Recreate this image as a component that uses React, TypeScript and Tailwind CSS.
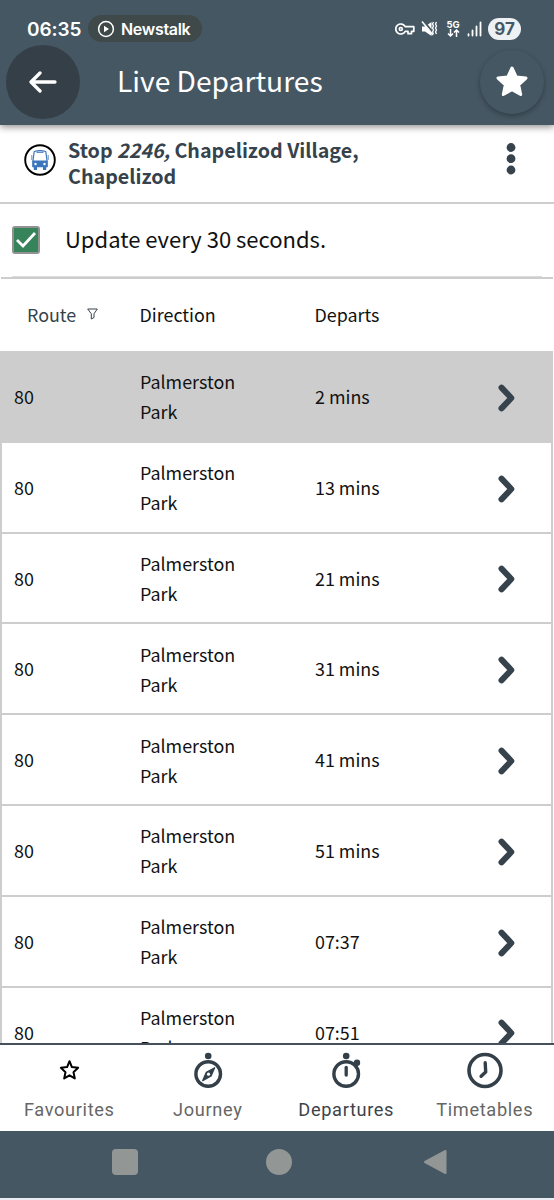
import type { ReactNode } from 'react';

type Departure = {
  route: string;
  direction: string;
  departs: string;
};

const departures: Departure[] = [
  { route: '80', direction: 'Palmerston Park', departs: '2 mins' },
  { route: '80', direction: 'Palmerston Park', departs: '13 mins' },
  { route: '80', direction: 'Palmerston Park', departs: '21 mins' },
  { route: '80', direction: 'Palmerston Park', departs: '31 mins' },
  { route: '80', direction: 'Palmerston Park', departs: '41 mins' },
  { route: '80', direction: 'Palmerston Park', departs: '51 mins' },
  { route: '80', direction: 'Palmerston Park', departs: '07:37' },
  { route: '80', direction: 'Palmerston Park', departs: '07:51' },
];

const StatusBar = () => (
  <div className="flex h-[45px] items-center pt-3 pl-[27px] pr-[33px] font-['Inter',sans-serif] text-white">
    <span className="w-[61px] pt-px text-[19px] leading-none font-semibold tracking-[-0.1px]">06:35</span>
    <div className="flex h-[27px] w-[114px] items-center rounded-full bg-[#3f4949] pl-[9px]">
      <svg width="18" height="18" viewBox="0 0 18 18" fill="none">
        <circle cx="9" cy="9" r="7.4" stroke="white" strokeWidth="1.5" />
        <path d="M7 5.8v6.4L12 9z" fill="white" />
      </svg>
      <span className="ml-[6px] text-[16px] leading-none font-semibold tracking-[-0.3px]">Newstalk</span>
    </div>
    <div className="ml-auto flex items-center">
      <svg width="20" height="14" viewBox="0 0 20 14" fill="none" stroke="white" strokeWidth="1.7">
        <path d="M10.2 4.7A5 5 0 1 0 10.2 9.3H13v2.4h3.5V9.3h2.3V4.7z" strokeLinejoin="round" />
        <circle cx="5.8" cy="7" r="1.5" />
      </svg>
      <svg className="ml-[6px]" width="17" height="18" viewBox="0 0 17 18">
        <path d="M1 6.5h3L10.5 2v14L4 11.500H1z" fill="white" />
        <path d="M2 0l11 14" stroke="#455763" strokeWidth="2" />
        <path d="M1 1.500l11 13.500" stroke="white" strokeWidth="1.600" />
        <path d="M12.500 2l-1 2 1 2-1 2 1 2-1 2 1 2M15.500 2l-1 2 1 2-1 2 1 2-1 2 1 2" fill="none" stroke="white" strokeWidth="1.300" />
      </svg>
      <div className="ml-[8px] flex w-[14px] flex-col items-center">
        <span className="text-[9.5px] leading-[9px] font-bold">5G</span>
        <svg width="13" height="8" viewBox="0 0 13 8" fill="none" stroke="white" strokeWidth="1.500">
          <path d="M3.500 0v7M1 4.500L3.500 7 6 4.500M9.500 8V1M7 3.500L9.500 1 12 3.500" />
        </svg>
      </div>
      <svg className="ml-[7px]" width="15" height="16" viewBox="0 0 15 16" stroke="white" strokeWidth="1.800" strokeLinecap="round">
        <path d="M1.500 13.200v1.300M5.500 9.500v5M9.500 5.500v9M13.500 1.500v13" />
      </svg>
      <span className="ml-[6px] flex h-[22px] w-[33px] items-center justify-center rounded-full bg-[#eef1f4] pt-px text-[17px] leading-none font-bold text-[#455763]">97</span>
    </div>
  </div>
);

const BusIcon = () => (
  <svg width="32" height="32" viewBox="0 0 32 32">
    <circle cx="16" cy="16" r="14.800" fill="white" stroke="black" strokeWidth="1.900" />
    <path d="M10.200 7.500Q16 5.800 21.800 7.500l1.200 9v6H9v-6z" fill="white" stroke="#3b76bd" strokeWidth="1.200" strokeLinejoin="round" />
    <path d="M12.500 8.300h7" stroke="#3b76bd" strokeWidth="1" />
    <path d="M8.400 16.500h15.200v6.700H8.400zM9.800 23h3.200v3H9.800zM19 23h3.200v3H19z" fill="#3b76bd" />
    <path d="M7.800 11v5M24.200 11v5" stroke="#3b76bd" strokeWidth="0.800" />
    <circle cx="11.500" cy="20" r="1.200" fill="white" />
    <circle cx="20.500" cy="20" r="1.200" fill="white" />
  </svg>
);

const Chevron = () => (
  <svg className="mt-[3px]" width="18" height="28" viewBox="0 0 18 28" fill="none" stroke="#36424c" strokeWidth="6" strokeLinecap="round" strokeLinejoin="round">
    <path d="M3.500 3.600l9.800 10.400-9.800 10.400" />
  </svg>
);

const DepartureRow = ({ departure, active }: { departure: Departure; active: boolean }) => (
  <div
    className={`grid h-[90.8px] shrink-0 grid-cols-[126px_175px_183px_1fr] items-center border-b-2 border-[#cdcdcd] pl-[12px] text-[17.9px] text-[#111] ${active ? 'bg-[#cdcdcd]' : 'bg-white'}`}
  >
    <span>{departure.route}</span>
    <span className="w-[110px] leading-[30px]">{departure.direction}</span>
    <span>{departure.departs}</span>
    <Chevron />
  </div>
);

const Tab = ({ label, active, children }: { label: string; active?: boolean; children: ReactNode }) => (
  <div className="flex flex-col items-center pt-[5px]">
    <svg width="42" height="42" viewBox="0 0 42 42" fill="none" stroke="#333f49">
      {children}
    </svg>
    <span className={`mt-[6px] text-[18.2px] leading-6 tracking-[0.65px] ${active ? 'text-[#3c444b]' : 'text-[#666]'}`}>
      {label}
    </span>
  </div>
);

const App = () => {
  return (
    <div className="flex h-[1200px] w-[554px] flex-col overflow-hidden bg-white font-['Noto_Sans_CJK_JP',sans-serif]">
      <header className="relative z-10 h-[125px] shrink-0 bg-[#455763] shadow-[0_2px_7px_rgba(0,0,0,0.45)]">
        <StatusBar />
        <div className="flex h-[74px] items-center pl-[6px] pr-[10px]">
          <button className="flex size-[74px] items-center justify-center rounded-full bg-[#353f48]">
            <svg width="28" height="22" viewBox="0 0 28 22" fill="none" stroke="white" strokeWidth="3.300" strokeLinecap="round" strokeLinejoin="round">
              <path d="M26 11H2M11 2L2 11l9 9" />
            </svg>
          </button>
          <h1 className="ml-[37px] pb-[4px] text-[28.2px] leading-none text-white">Live Departures</h1>
          <button className="ml-auto flex size-[64px] items-center justify-center rounded-full shadow-[0_2px_5px_rgba(0,0,0,0.3)]">
            <svg width="34" height="34" viewBox="0 0 34 34" fill="white" stroke="white" strokeWidth="3" strokeLinejoin="round">
              <path d="M17 3l4.200 9 9.800 1.100-7.300 6.700 2 9.700-8.700-4.900-8.700 4.900 2-9.700L3 13.100l9.800-1.100z" />
            </svg>
          </button>
        </div>
      </header>

      <section className="flex h-[79px] shrink-0 border-b-2 border-[#cdcdcd] pt-[12px] pl-[24px] pr-[38px]">
        <div className="mt-[7px]">
          <BusIcon />
        </div>
        <h2 className="ml-[12px] w-[320px] text-[19.7px] leading-[26px] font-bold text-[#36424c]">
          Stop <i>2246,</i> Chapelizod Village, Chapelizod
        </h2>
        <svg className="mt-[6px] ml-auto" width="10" height="32" viewBox="0 0 10 32" fill="#36424c">
          <circle cx="5" cy="4.500" r="4.400" />
          <circle cx="5" cy="15.700" r="4.400" />
          <circle cx="5" cy="27" r="4.400" />
        </svg>
      </section>

      <label className="flex h-[72px] shrink-0 items-center pl-[12px] text-[22px] text-[#111]">
        <span className="flex size-[28px] items-center justify-center rounded-[3px] border-2 border-[#929292] bg-[#37835a]">
          <svg width="22" height="18" viewBox="0 0 22 18" fill="none" stroke="white" strokeWidth="2.800">
            <path d="M2 9l6 6L20 2" />
          </svg>
        </span>
        <span className="ml-[25px] pb-[4px]">Update every 30 seconds.</span>
      </label>
      <div className="mx-[12px] h-[1px] shrink-0 bg-[#dcdcdc]" />
      <div className="mx-[1px] h-[2px] shrink-0 bg-[#cdcdcd]" />

      <div className="grid h-[72px] shrink-0 grid-cols-[112.5px_175px_1fr] items-center pl-[27px] pb-[1px] text-[17.9px] text-[#111]">
        <span className="flex items-center gap-[11px] text-[#36424c]">
          Route
          <svg width="11" height="12" viewBox="0 0 11 12" fill="none" stroke="#36424c">
            <path d="M.7 1h9.600L7 5.800v3.700L4.300 11V5.800z" />
          </svg>
        </span>
        <span>Direction</span>
        <span>Departs</span>
      </div>

      <main className="mr-[1px] flex min-h-0 flex-1 flex-col overflow-hidden border-x-2 border-t border-[#cdcdcd]">
        {departures.map((departure, i) => (
          <DepartureRow key={i} departure={departure} active={i === 0} />
        ))}
      </main>

      <nav className="grid h-[88px] shrink-0 grid-cols-4 border-t-2 border-[#46515b] bg-white font-['Roboto',sans-serif]">
        <Tab label="Favourites">
          <path d="M21.500 11.200l2.400 5.900 6.200.7-4.600 4.400 1.300 6.200-5.300-3.100-5.300 3.100 1.300-6.200-4.600-4.400 6.200-.7z" stroke="black" strokeWidth="2" strokeLinejoin="round" />
        </Tab>
        <Tab label="Journey">
          <circle cx="21.200" cy="24" r="12.300" strokeWidth="3.400" />
          <circle cx="21.200" cy="6" r="3.300" fill="#333f49" stroke="none" />
          <path d="M27.700 17.700l-3.600 8.300-8.400 4.600 3.600-8.300z" fill="#333f49" strokeWidth="1.200" strokeLinejoin="round" />
          <circle cx="21.500" cy="24.200" r="1.600" fill="white" stroke="none" />
        </Tab>
        <Tab label="Departures" active>
          <circle cx="21.200" cy="24" r="12.300" strokeWidth="3.400" />
          <circle cx="21.200" cy="6" r="3.300" fill="#333f49" stroke="none" />
          <circle cx="32" cy="12.800" r="3.200" fill="#333f49" stroke="none" />
          <path d="M21.200 17.500v7.500" strokeWidth="3.300" strokeLinecap="round" />
        </Tab>
        <Tab label="Timetables">
          <circle cx="21" cy="20.500" r="16" strokeWidth="3.600" />
          <path d="M21.200 12.800l.5 9.200-4.600 4.300" strokeWidth="3.400" strokeLinecap="round" strokeLinejoin="round" />
        </Tab>
      </nav>

      <footer className="flex h-[67px] shrink-0 items-center bg-[#455763] pl-[112px] pb-[5px]">
        <span className="size-[26px] rounded-[4px] bg-[#929796]" />
        <span className="ml-[128px] size-[26px] rounded-full bg-[#929796]" />
        <svg className="ml-[131px]" width="24" height="26" viewBox="0 0 24 26">
          <path d="M22.500 2v22L2 13z" fill="#929796" stroke="#929796" strokeWidth="2" strokeLinejoin="round" />
        </svg>
      </footer>
      <div className="h-[2px] shrink-0 bg-[#e7edf2]" />
    </div>
  );
};

export default App;
